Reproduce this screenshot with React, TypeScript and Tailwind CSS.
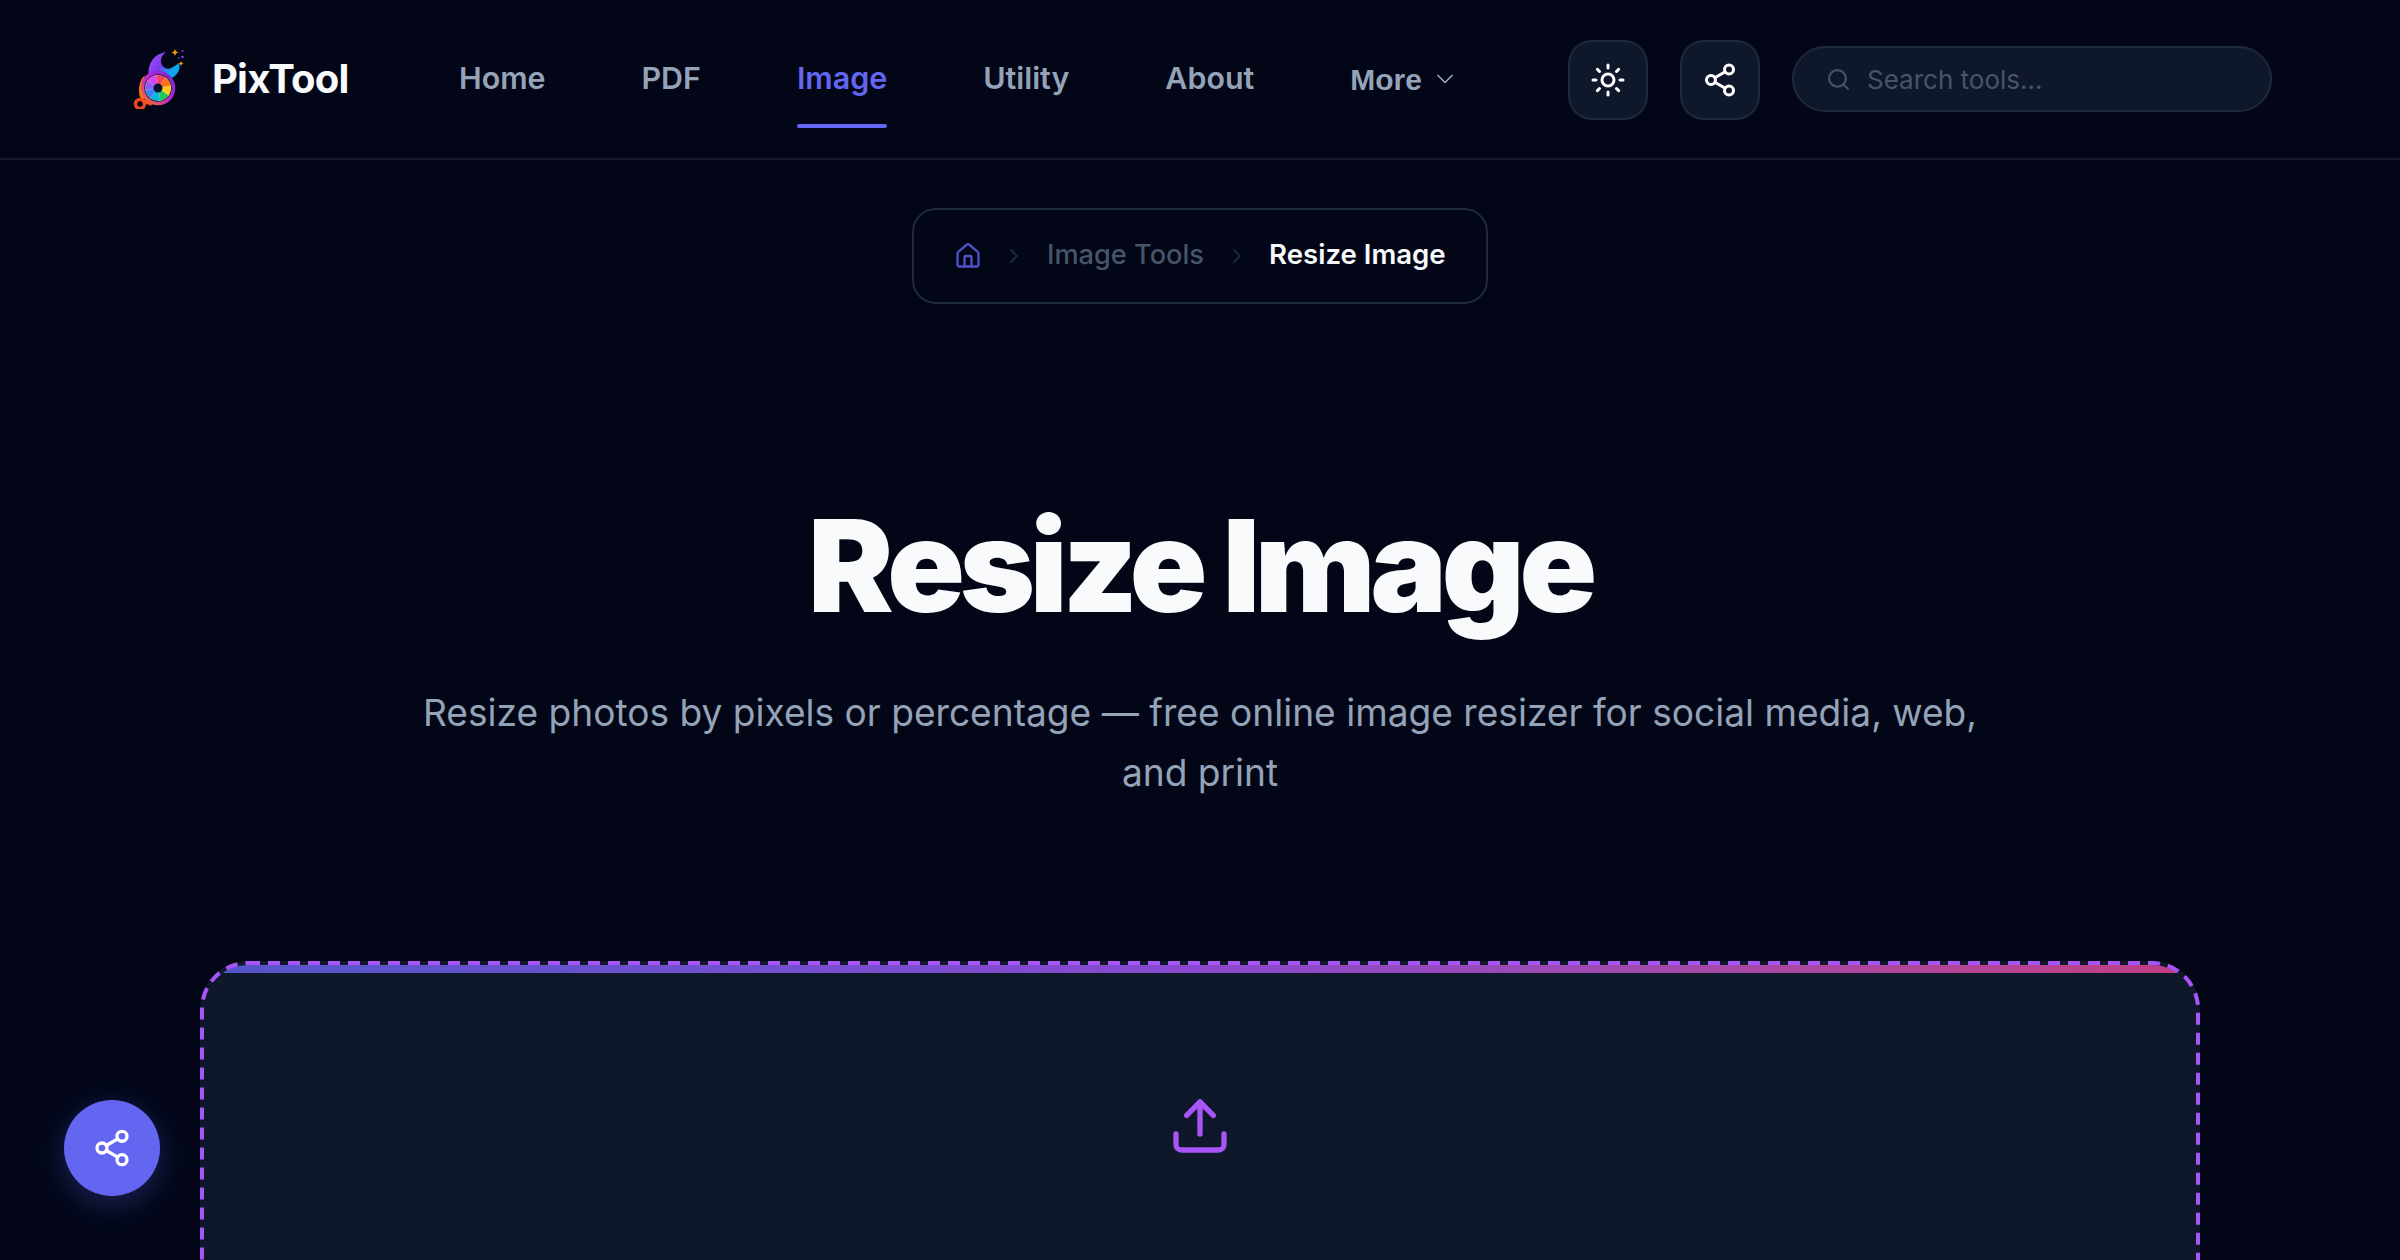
import { ChevronDown, ChevronRight, House, Search, Share2, Sun, Upload } from "lucide-react";

function Logo() {
  const cx = 38, cy = 45, r = 13;
  const colors = ["#f43f5e", "#f97316", "#facc15", "#22c55e", "#06b6d4", "#3b82f6", "#8b5cf6", "#d946ef"];
  const wedges = colors.map((c, i) => {
    const a0 = (i * 45 - 100) * Math.PI / 180;
    const a1 = ((i + 1) * 45 - 96) * Math.PI / 180;
    return { c, d: `M${cx} ${cy}L${cx + r * Math.cos(a0)} ${cy + r * Math.sin(a0)}A${r} ${r} 0 0 1 ${cx + r * Math.cos(a1)} ${cy + r * Math.sin(a1)}Z` };
  });
  return (
    <svg width="60" height="60" viewBox="10 6 60 60" className="shrink-0">
      <defs>
        <linearGradient id="wr" x1="0" y1="0" x2="1" y2="0.5">
          <stop offset="0" stopColor="#a855f7" />
          <stop offset="0.5" stopColor="#7c3aed" />
          <stop offset="0.85" stopColor="#0ea5e9" />
        </linearGradient>
        <linearGradient id="rg" x1="0" y1="1" x2="1" y2="0">
          <stop offset="0" stopColor="#f97316" />
          <stop offset="0.5" stopColor="#c026d3" />
          <stop offset="1" stopColor="#6d28d9" />
        </linearGradient>
      </defs>
      <path d="M29 34C27 22 33 11 46 9C41 13 40 18 42 22C44 26 49 27 53 24C56 22 58 21 59 20C61 26 58 32 50 36L46 33L29 34Z" fill="url(#wr)" />
      <path d="M21 56C17 48 19 37 25 32C22 41 23 50 29 56Z" fill="#f97316" />
      <circle cx="20" cy="61" r="4.500" fill="none" stroke="#ef4422" strokeWidth="3.500" />
      <path d="M23 58L32 61" stroke="#f4511e" strokeWidth="3.500" />
      <circle cx={cx} cy={cy} r="15.500" fill="#0a0a20" stroke="url(#rg)" strokeWidth="3.500" />
      {wedges.map((w) => <path key={w.c} d={w.d} fill={w.c} stroke="#ffffff" strokeOpacity="0.5" strokeWidth="0.4" />)}
      <circle cx={cx} cy={cy} r="4.500" fill="#0a1030" />
      <path d="M55 6l1 2.500 2.500 1-2.500 1-1 2.500-1-2.500-2.500-1 2.500-1z" fill="#f59e0b" />
      <path d="M61 18l.8 1.700 1.700.8-1.700.8-.8 1.700-.8-1.700-1.700-.8 1.700-.8z" fill="#f59e0b" />
      <circle cx="62.500" cy="8" r="1" fill="#9333ea" />
      <circle cx="62.500" cy="14" r="1.300" fill="#9333ea" />
      <circle cx="58.500" cy="15" r="0.800" fill="#6366f1" />
    </svg>
  );
}

function NavLink({ label, active }: { label: string; active?: boolean }) {
  return (
    <a className={`relative block leading-[40px] text-[30.400px] font-semibold -mt-[3px] ${active ? "text-[#6366f1]" : "text-[#94a3b8]"}`}>
      {label}
      {active && <span className="absolute left-0 right-0 -bottom-[30px] h-[4px] rounded-full bg-[#6366f1]" />}
    </a>
  );
}

export default function App() {
  return (
    <div className="h-screen overflow-hidden bg-[#020617] font-['Inter',sans-serif]">
      <header className="h-[160px] flex items-center border-b-2 border-[#141c2e] pl-[130px] pr-[128px]">
        <div className="flex items-center w-[329px]">
          <Logo />
          <span className="ml-[22px] text-[40px] font-bold text-[#f8fafc] tracking-[-0.02em]">PixTool</span>
        </div>
        <nav className="flex items-center gap-[96px]">
          <NavLink label="Home" />
          <NavLink label="PDF" />
          <NavLink label="Image" active />
          <NavLink label="Utility" />
          <NavLink label="About" />
          <button className="flex items-center gap-[9px] text-[30px] font-bold text-[#94a3b8] font-['Liberation_Sans',sans-serif]">
            More
            <ChevronDown size={28} strokeWidth={1.500} />
          </button>
        </nav>
        <div className="ml-auto flex items-center">
          <button className="mt-[2px] w-[80px] h-[80px] rounded-[24px] bg-[#0f172a] border-2 border-[#1e293b] flex items-center justify-center text-white">
            <Sun size={36} strokeWidth={2} />
          </button>
          <button className="mt-[2px] ml-[32px] w-[80px] h-[80px] rounded-[24px] bg-[#0f172a] border-2 border-[#1e293b] flex items-center justify-center text-white">
            <Share2 size={36} strokeWidth={2} />
          </button>
          <div className="ml-[32px] w-[480px] h-[66px] rounded-full bg-[#0f172a] border-2 border-[#1e293b] flex items-center pl-[32px]">
            <Search size={25} strokeWidth={2} className="text-[#475569]" />
            <span className="ml-[16px] text-[26px] text-[#475569]">Search tools...</span>
          </div>
        </div>
      </header>

      <main className="flex flex-col items-center">
        <div className="mt-[48px] h-[96px] w-[576px] rounded-[24px] border-2 border-[#1e293b] flex items-center pl-[40px] text-[27.200px] font-medium">
          <House size={28} strokeWidth={2} className="text-[#4f52c8]" />
          <ChevronRight size={24} strokeWidth={2} className="ml-[20px] text-[#1e293b]" />
          <span className="ml-[21px] -mt-[2px] text-[#475569]">Image Tools</span>
          <ChevronRight size={24} strokeWidth={2} className="ml-[21px] text-[#1e293b]" />
          <span className="ml-[20px] -mt-[2px] text-[27.600px] font-semibold text-[#f8fafc]">Resize Image</span>
        </div>
        <h1 className="mt-[192px] text-[128px] leading-[1.1] font-black text-[#f8fafc] tracking-[-0.04em]">Resize Image</h1>
        <p className="mt-[46px] w-[1600px] text-center text-[37.120px] leading-[60px] text-[#94a3b8]">
          Resize photos by pixels or percentage — free online image resizer for social media, web, and print
        </p>
        <section className="relative mt-[158px] w-[2000px] h-[709px] shrink-0 rounded-[48px] bg-[#0f172a]">
          <div className="m-[4px] h-[701px] rounded-[44px] overflow-hidden flex flex-col items-center">
            <div className="w-full h-[8px] shrink-0 bg-gradient-to-r from-[#6366f1] via-[#a855f7] to-[#ec4899] opacity-80" />
            <Upload size={64} strokeWidth={2} className="mt-[121px] text-[#a855f7]" />
          </div>
          <svg width="2000" height="709" className="absolute inset-0 pointer-events-none">
            <rect x="2" y="2" width="1996" height="705" rx="46" ry="46" fill="none" stroke="#a855f7" strokeWidth="4" strokeDasharray="12 8" />
          </svg>
        </section>
      </main>

      <button className="fixed left-[64px] top-[1100px] w-[96px] h-[96px] rounded-full bg-[#6366f1] flex items-center justify-center text-white shadow-[0_8px_32px_rgba(99,102,241,0.3)]">
        <Share2 size={40} strokeWidth={2} />
      </button>
    </div>
  );
}
